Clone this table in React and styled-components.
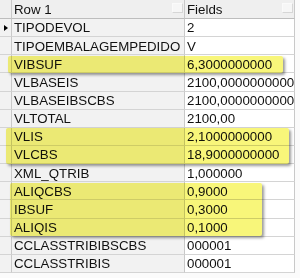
import React from 'react';
import styled, { createGlobalStyle } from 'styled-components';

const GlobalStyle = createGlobalStyle`
  html, body {
    margin: 0;
    padding: 0;
    background: #fbfbfb;
  }
  body {
    font-family: "Liberation Sans", Arial, sans-serif;
  }
`;

const HEADER_H = 19;
const ROW_H = 18.15;

const Frame = styled.div`
  position: relative;
  width: 300px;
  height: 278px;
  overflow: hidden;
  background: #fbfbfb;
`;

const Grid = styled.div`
  display: grid;
  grid-template-columns: 12px 173px 110px;
  grid-auto-rows: ${ROW_H}px;
  grid-template-rows: ${HEADER_H}px;
  width: 295px;
  font-size: 13.3px;
  color: #111;
`;

const Cell = styled.div`
  box-sizing: border-box;
  display: flex;
  align-items: center;
  padding-left: ${p => (p.$indicator ? 0 : 2)}px;
  border-right: 1px solid #c9c9c9;
  border-bottom: 1px solid #d4d4d4;
  background: ${p => (p.$value ? '#ffffff' : '#f2f2f2')};
  white-space: nowrap;
  overflow: hidden;
  line-height: 1;
  padding-top: 1px;
`;

const HeaderCell = styled(Cell)`
  position: relative;
  background: #efefef;
  border-bottom: 1px solid #bdbdbd;
`;

const Grip = styled.span`
  position: absolute;
  right: 1px;
  top: 3px;
  width: 9px;
  height: 8px;
  background: #f6f6f6;
  border: 1px solid #d6d6d6;
  border-left-color: #fafafa;
  border-top-color: #fafafa;
`;

const Arrow = styled.span`
  width: 0;
  height: 0;
  margin-left: 4px;
  border-top: 3.5px solid transparent;
  border-bottom: 3.5px solid transparent;
  border-left: 4px solid #000;
`;

const Highlight = styled.div`
  position: absolute;
  background: #f8f67a;
  mix-blend-mode: multiply;
  border-radius: 2px;
  box-shadow: 2px 2px 3px rgba(0, 0, 0, 0.4);
`;

const rows = [
  ['TIPODEVOL', '2'],
  ['TIPOEMBALAGEMPEDIDO', 'V'],
  ['VIBSUF', '6,3000000000'],
  ['VLBASEIS', '2100,0000000000'],
  ['VLBASEIBSCBS', '2100,0000000000'],
  ['VLTOTAL', '2100,00'],
  ['VLIS', '2,1000000000'],
  ['VLCBS', '18,9000000000'],
  ['XML_QTRIB', '1,000000'],
  ['ALIQCBS', '0,9000'],
  ['IBSUF', '0,3000'],
  ['ALIQIS', '0,1000'],
  ['CCLASSTRIBIBSCBS', '000001'],
  ['CCLASSTRIBIS', '000001'],
];

const marks = [
  { from: 2, count: 1, left: 8, right: 283 },
  { from: 6, count: 2, left: 6, right: 289 },
  { from: 9, count: 3, left: 10, right: 262 },
];

export default function App() {
  return (
    <Frame>
      <GlobalStyle />
      <Grid>
        <HeaderCell $indicator />
        <HeaderCell>
          Row 1
          <Grip />
        </HeaderCell>
        <HeaderCell>
          Fields
          <Grip />
        </HeaderCell>
        {rows.map(([name, value], i) => (
          <React.Fragment key={name}>
            <Cell $indicator>{i === 0 && <Arrow />}</Cell>
            <Cell>{name}</Cell>
            <Cell $value>{value}</Cell>
          </React.Fragment>
        ))}
      </Grid>
      {marks.map(m => (
        <Highlight
          key={m.from}
          style={{
            left: m.left,
            width: m.right - m.left,
            top: HEADER_H + m.from * ROW_H + 0.5,
            height: m.count * ROW_H - 1,
          }}
        />
      ))}
    </Frame>
  );
}
